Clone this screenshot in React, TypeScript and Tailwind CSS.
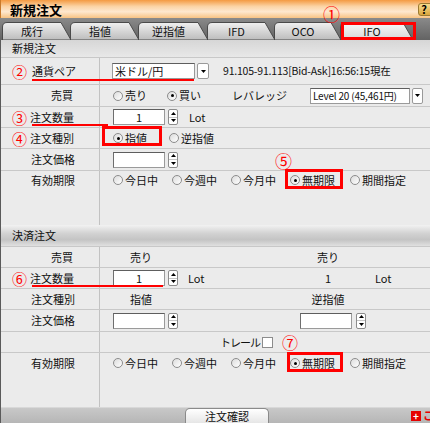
import React from 'react';

const tabs = [
  { label: '成行', w: 68 },
  { label: '指値', w: 68 },
  { label: '逆指値', w: 69 },
  { label: 'IFD', w: 67 },
  { label: 'OCO', w: 66 },
  { label: 'IFO', w: 72, active: true },
];

const Radio = ({ label, checked = false, className = '' }: { label: string; checked?: boolean; className?: string }) => (
  <div className={`flex items-center h-[16px] flex-none ${className}`}>
    <span className="w-[10px] h-[10px] rounded-full border border-[#8c8c8c] bg-gradient-to-br from-[#dcdcdc] to-white flex items-center justify-center flex-none">
      {checked && <span className="w-[3px] h-[3px] rounded-full bg-black" />}
    </span>
    <span className="ml-[2px] whitespace-nowrap">{label}</span>
  </div>
);

const Spinner = ({ className = 'ml-[3px]' }: { className?: string }) => (
  <div className={`${className} w-[10px] h-[16px] flex flex-col border border-[#8c8c8c] rounded-[2px] bg-white flex-none`}>
    <div className="flex-1 flex items-center justify-center border-b border-[#c4c4c4]">
      <svg width="5" height="3"><path d="M2.5 0L5 3H0z" fill="#000" /></svg>
    </div>
    <div className="flex-1 flex items-center justify-center">
      <svg width="5" height="3"><path d="M0 0h5L2.5 3z" fill="#000" /></svg>
    </div>
  </div>
);

const NumInput = ({ value = '' }: { value?: string }) => (
  <div className="w-[52px] h-[16px] bg-white border border-[#9a9a9a] border-t-[#5e5e5e] border-l-[#6e6e6e] flex items-center justify-center flex-none">
    {value}
  </div>
);

const DropBtn = ({ className = '' }: { className?: string }) => (
  <div className={`ml-[2px] h-[16px] bg-white border border-[#9a9a9a] rounded-[2px] flex items-center justify-center flex-none ${className}`}>
    <svg width="5" height="3"><path d="M0 0h5L2.5 3z" fill="#000" /></svg>
  </div>
);

const Num = ({ n, gap = 'mr-[3px]' }: { n: string; gap?: string }) => (
  <span className={`ml-[11px] ${gap} h-[15px] flex items-center text-[#f00] text-[15px] leading-none`}>{n}</span>
);

const Label = ({ children, tall = false, top = 'pt-0' }: { children: React.ReactNode; tall?: boolean; top?: string }) => (
  <div className={`w-[99px] flex-none border-r border-[#c2c2c2] flex ${tall ? `items-start ${top}` : 'items-center'}`}>
    {children}
  </div>
);

const Row = ({ h, children, last = false }: { h: string; children: React.ReactNode; last?: boolean }) => (
  <div className={`flex ${h} ${last ? '' : 'border-b border-[#c8c8c8]'}`}>{children}</div>
);

export default function App() {
  return (
    <div className="relative w-[430px] h-[423px] overflow-hidden bg-[#ebebeb] text-[11px] text-[#111] font-['Noto_Sans_CJK_JP',sans-serif] leading-none">
      {/* title bar */}
      <div className="h-[18px] flex items-center bg-[linear-gradient(to_bottom,#f49a42_0%,#fbd3a4_35%,#fee8cf_65%,#f8c383_100%)] border-l border-[#c97a2c]">
        <span className="ml-[9px] text-[13px] font-bold text-black">新規注文</span>
        <div className="ml-auto mr-[-3px] w-[15px] h-[13px] rounded-[3px] border border-[#9c7a30] bg-gradient-to-b from-[#f8dc8c] to-[#d9a53c] flex items-center justify-center text-[11px] font-bold text-black">
          <span className="-ml-[3px]">?</span>
        </div>
      </div>

      {/* tabs */}
      <div className="h-[22px] flex items-end pl-[2px] bg-gradient-to-b from-[#8a8a8a] to-[#636363]">
        {tabs.map((t, i) => (
          <div key={t.label} className="relative h-[18px] flex-none" style={{ width: t.w }}>
            <svg className="absolute left-0 top-0" width={t.w + 2} height="18">
              <defs>
                <linearGradient id={`tg${i}`} x1="0" y1="0" x2="0" y2="1">
                  <stop offset="0" stopColor={t.active ? '#fafafa' : '#f0f0f0'} />
                  <stop offset="1" stopColor={t.active ? '#d6d6d6' : '#bcbcbc'} />
                </linearGradient>
              </defs>
              <path d={`M0.5 18V5Q0.5 0.5 5 0.5H${t.w - 9}L${t.w + 1} 18Z`} fill={`url(#tg${i})`} stroke="#4a4a4a" />
            </svg>
            <div className="relative h-full flex items-center justify-center pr-[8px] text-[11px] text-[#111]">{t.label}</div>
          </div>
        ))}
      </div>

      <div className="border-l border-[#5a5a5a]">
        {/* 新規注文 */}
        <div className="h-[18px] flex items-center pl-[11px] bg-gradient-to-b from-[#d6d6d6] to-[#e8e8e8] border-b border-[#c8c8c8]">新規注文</div>

        <Row h="h-[27px]">
          <Label><Num n="②" gap="mr-[5px]" />通貨ペア</Label>
          <div className="flex items-center pl-[12px]">
            <div className="w-[83px] h-[16px] bg-white border border-[#9a9a9a] border-t-[#5e5e5e] flex items-center pl-[2px]">米ドル/円</div>
            <DropBtn className="w-[12px]" />
            <span className="ml-[14px] text-[10.5px] tracking-[-0.2px] whitespace-nowrap">91.105-91.113[Bid-Ask]16:56:15現在</span>
          </div>
        </Row>

        <Row h="h-[22px]">
          <Label><span className="pl-[50px]">売買</span></Label>
          <div className="flex items-center pl-[13px]">
            <Radio label="売り" className="w-[54px]" />
            <Radio label="買い" checked className="w-[65px]" />
            <span className="w-[78px] flex-none">レバレッジ</span>
            <div className="w-[100px] h-[16px] bg-white border border-[#9a9a9a] border-t-[#5e5e5e] flex items-center pl-[2px] text-[10px] tracking-[-0.2px] whitespace-nowrap overflow-hidden">Level 20 (45,461円)</div>
            <DropBtn className="w-[11px]" />
          </div>
        </Row>

        <Row h="h-[21px]">
          <Label><Num n="③" />注文数量</Label>
          <div className="flex items-center pl-[13px]">
            <NumInput value="1" />
            <Spinner />
            <span className="ml-[11px]">Lot</span>
          </div>
        </Row>

        <Row h="h-[21px]">
          <Label><Num n="④" />注文種別</Label>
          <div className="flex items-center pl-[13px]">
            <Radio label="指値" checked className="w-[56px]" />
            <Radio label="逆指値" />
          </div>
        </Row>

        <Row h="h-[22px]">
          <Label><span className="pl-[30px]">注文価格</span></Label>
          <div className="flex items-center pl-[13px]">
            <NumInput />
            <Spinner />
          </div>
        </Row>

        <Row h="h-[54px]" last>
          <Label tall top="pt-[1px]"><span className="pl-[30px] h-[16px] flex items-center">有効期限</span></Label>
          <div className="flex items-start pt-[1px] pl-[13px]">
            <Radio label="今日中" className="w-[59px]" />
            <Radio label="今週中" className="w-[59px]" />
            <Radio label="今月中" className="w-[59px]" />
            <Radio label="無期限" checked className="w-[60px]" />
            <Radio label="期間指定" />
          </div>
        </Row>

        {/* 決済注文 */}
        <div className="h-[22px] flex items-center pl-[11px] bg-[linear-gradient(to_bottom,#f2f2f2_0%,#d2d2d2_40%,#c4c4c4_70%,#e0e0e0_100%)] border-b border-[#c8c8c8]">決済注文</div>

        <Row h="h-[21px]">
          <Label><span className="pl-[50px]">売買</span></Label>
          <div className="w-[115px] flex-none flex items-center">
            <span className="ml-[15px] w-[52px] text-center">売り</span>
          </div>
          <div className="flex items-center">
            <span className="ml-[87px] w-[52px] text-center">売り</span>
          </div>
        </Row>

        <Row h="h-[21px]">
          <Label><Num n="⑥" />注文数量</Label>
          <div className="w-[115px] flex-none flex items-center pl-[13px]">
            <NumInput value="1" />
            <Spinner />
            <span className="ml-[10px]">Lot</span>
          </div>
          <div className="flex items-center">
            <span className="ml-[87px] w-[52px] text-center">1</span>
            <span className="ml-[21px]">Lot</span>
          </div>
        </Row>

        <Row h="h-[21px]">
          <Label><span className="pl-[30px]">注文種別</span></Label>
          <div className="w-[115px] flex-none flex items-center">
            <span className="ml-[15px] w-[52px] text-center">指値</span>
          </div>
          <div className="flex items-center">
            <span className="ml-[87px] w-[52px] text-center">逆指値</span>
          </div>
        </Row>

        <Row h="h-[22px]">
          <Label><span className="pl-[30px]">注文価格</span></Label>
          <div className="w-[115px] flex-none flex items-center pl-[13px]">
            <NumInput />
            <Spinner />
          </div>
          <div className="flex items-center pl-[85px]">
            <NumInput />
            <Spinner className="ml-[4px]" />
          </div>
        </Row>

        <Row h="h-[21px]">
          <Label><span /></Label>
          <div className="w-[115px] flex-none" />
          <div className="flex items-center pl-[5px]">
            <span className="tracking-[-1px] whitespace-nowrap">トレール</span>
            <span className="ml-[2px] w-[11px] h-[11px] bg-white border border-[#8c8c8c]" />
            <span className="ml-[9px] text-[#f00] text-[16px] leading-none">⑦</span>
          </div>
        </Row>

        <Row h="h-[54px]" last>
          <Label tall top="pt-[2px]"><span className="pl-[30px] h-[16px] flex items-center">有効期限</span></Label>
          <div className="flex items-start pt-[2px] pl-[13px]">
            <Radio label="今日中" className="w-[59px]" />
            <Radio label="今週中" className="w-[59px]" />
            <Radio label="今月中" className="w-[59px]" />
            <Radio label="無期限" checked className="w-[60px]" />
            <Radio label="期間指定" />
          </div>
        </Row>

        {/* bottom bar */}
        <div className="h-[16px] flex items-end bg-gradient-to-b from-[#c8c8c8] to-[#b6b6b6] border-t border-[#d8d8d8]">
          <div className="ml-[184px] w-[84px] h-[15px] rounded-t-[5px] border border-b-0 border-[#8a8a8a] bg-gradient-to-b from-white to-[#e6e6e6] flex items-center justify-center">注文確認</div>
          <div className="ml-auto mb-[2px] flex items-center">
            <span className="w-[10px] h-[10px] bg-[#e60000] flex items-center justify-center text-white text-[10px] font-bold leading-none">+</span>
            <span className="ml-[2px] mr-[-4px] text-[#e60000] text-[11px] font-bold">こ</span>
          </div>
        </div>
      </div>

      {/* annotations */}
      <span className="absolute left-[323px] top-[5px] text-[#f00] text-[17px] leading-none">①</span>
      <div className="absolute left-[341px] top-[22px] w-[75px] h-[18px] border-[3px] border-[#f00]" />
      <div className="absolute left-[32px] top-[79px] w-[162px] h-[2px] bg-[#f00]" />
      <div className="absolute left-[32px] top-[124px] w-[76px] h-[2px] bg-[#f00]" />
      <div className="absolute left-[102px] top-[126px] w-[60px] h-[20px] border-[3px] border-[#f00]" />
      <span className="absolute left-[275px] top-[152px] text-[#f00] text-[17px] leading-none">⑤</span>
      <div className="absolute left-[285px] top-[169px] w-[58px] h-[20px] border-[3px] border-[#f00]" />
      <div className="absolute left-[32px] top-[285px] w-[131px] h-[2px] bg-[#f00]" />
      <div className="absolute left-[287px] top-[352px] w-[56px] h-[20px] border-[3px] border-[#f00]" />
    </div>
  );
}
